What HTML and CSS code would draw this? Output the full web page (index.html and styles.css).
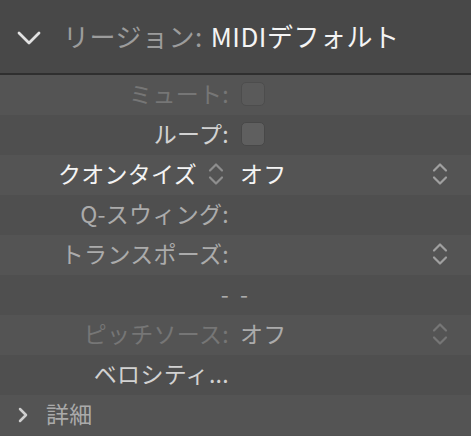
FILE: index.html
```html
<!DOCTYPE html>
<html lang="ja">
  <head>
    <meta charset="UTF-8">
    <meta name="viewport" content="width=device-width, initial-scale=1.0">
    <title>リージョン インスペクタ</title>
    <link rel="stylesheet" href="styles.css">
  </head>
  <body>
    <div class="inspector">
      <div class="header">
        <svg class="disclosure" width="24" height="14" viewBox="0 0 24 14">
          <path d="M2 2 L12 12 L22 2" fill="none" stroke="#e2e2e2" stroke-width="2.8" stroke-linecap="round" stroke-linejoin="round"/>
        </svg>
        <span class="header-label">リージョン:</span>
        <span class="header-name">MIDIデフォルト</span>
      </div>

      <div class="row light">
        <div class="label dim">ミュート:</div>
        <div class="value"><span class="checkbox dim-box"></span></div>
      </div>
      <div class="row dark">
        <div class="label soft">ループ:</div>
        <div class="value"><span class="checkbox"></span></div>
      </div>
      <div class="row light">
        <div class="label bright">
          クオンタイズ
          <svg class="stepper small" width="16" height="24" viewBox="0 0 16 24">
            <path d="M2 8.5 L8 2.5 L14 8.5 M2 15.5 L8 21.5 L14 15.5" fill="none" stroke="#8e8e8e" stroke-width="2.2" stroke-linecap="round" stroke-linejoin="round"/>
          </svg>
        </div>
        <div class="value bright">オフ</div>
        <svg class="stepper" width="16" height="24" viewBox="0 0 16 24">
          <path d="M2 8.5 L8 2.5 L14 8.5 M2 15.5 L8 21.5 L14 15.5" fill="none" stroke="#a0a0a0" stroke-width="2.2" stroke-linecap="round" stroke-linejoin="round"/>
        </svg>
      </div>
      <div class="row dark">
        <div class="label mid">Q-スウィング:</div>
        <div class="value"></div>
      </div>
      <div class="row light">
        <div class="label mid">トランスポーズ:</div>
        <div class="value"></div>
        <svg class="stepper" width="16" height="24" viewBox="0 0 16 24">
          <path d="M2 8.5 L8 2.5 L14 8.5 M2 15.5 L8 21.5 L14 15.5" fill="none" stroke="#a0a0a0" stroke-width="2.2" stroke-linecap="round" stroke-linejoin="round"/>
        </svg>
      </div>
      <div class="row dark">
        <div class="label mid">-</div>
        <div class="value mid">-</div>
      </div>
      <div class="row light">
        <div class="label dim">ピッチソース:</div>
        <div class="value mid">オフ</div>
        <svg class="stepper" width="16" height="24" viewBox="0 0 16 24">
          <path d="M2 8.5 L8 2.5 L14 8.5 M2 15.5 L8 21.5 L14 15.5" fill="none" stroke="#767676" stroke-width="2.2" stroke-linecap="round" stroke-linejoin="round"/>
        </svg>
      </div>
      <div class="row dark">
        <div class="label soft">ベロシティ...</div>
        <div class="value"></div>
      </div>

      <div class="row light details">
        <svg class="disclosure-small" width="12" height="16" viewBox="0 0 12 16">
          <path d="M3 2 L9 8 L3 14" fill="none" stroke="#cfcfcf" stroke-width="2.5" stroke-linecap="round" stroke-linejoin="round"/>
        </svg>
        <span class="details-label">詳細</span>
      </div>
    </div>
  </body>
</html>
```

FILE: styles.css
```css
*{
    margin: 0;
    padding: 0;
    box-sizing: border-box;
}

body{
    background: #525252;
    font-family: "Noto Sans CJK JP", "Noto Sans", sans-serif;
}

.inspector{
    width: 471px;
    height: 436px;
    overflow: hidden;
}

.header{
    height: 75px;
    background: #484848;
    border-bottom: 2px solid #2f2f2f;
    display: flex;
    align-items: center;
    padding-left: 17px;
    padding-bottom: 2px;
    font-size: 26px;
    letter-spacing: 0.5px;
}

.disclosure{
    margin-right: 22px;
    margin-top: 4px;
}

.header-label{
    color: #9c9c9c;
    margin-right: 8px;
}

.header-name{
    color: #f4f4f4;
}

.row{
    height: 40px;
    display: flex;
    align-items: center;
    font-size: 23px;
    letter-spacing: 0.3px;
    padding-right: 23px;
    padding-bottom: 4px; /* lift the text a little, CJK glyphs sit low */
}

.light{
    background: #545454;
}

.dark{
    background: #4f4f4f;
}

.label{
    width: 229px;
    flex-shrink: 0;
    display: flex;
    align-items: center;
    justify-content: flex-end;
}

.value{
    flex: 1;
    padding-left: 11px;
    display: flex;
    align-items: center;
}

.stepper{
    margin-top: 2px;
}

.stepper.small{
    margin-left: 11px;
    margin-right: 5px;
}

.checkbox{
    display: inline-block;
    width: 24px;
    height: 24px;
    margin-left: 1px;
    margin-top: 2px;
    border-radius: 5px;
    background: #5f5f5f;
    border: 1px solid #484848;
}

.dim-box{
    opacity: 0.55;
}

/* text tones */
.bright{ color: #f4f4f4; }
.soft{ color: #d2d2d2; }
.mid{ color: #ababab; }
.dim{ color: #767676; }

.details{
    padding-left: 17px;
}

.disclosure-small{
    margin-right: 17px;
    margin-top: 3px;
}

.details-label{
    color: #aaaaaa;
}
```
